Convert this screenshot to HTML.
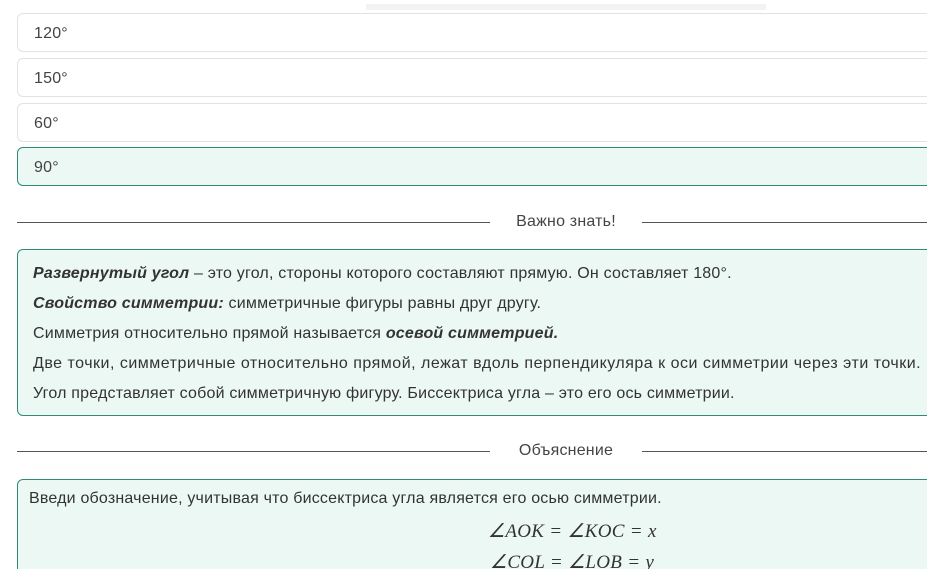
<!DOCTYPE html>
<html style="height:569px;overflow:hidden"><head><style>
body{margin:0;width:927px;height:569px;overflow:hidden;background:#fff;font-family:"Liberation Sans",sans-serif;color:#333;font-size:16px;position:relative;letter-spacing:0.2px}
.opt{position:absolute;left:17px;width:930px;height:37px;border:1px solid #e2e2e2;border-radius:6px;background:#fff;box-sizing:content-box}
.opt span{position:absolute;left:16px;top:11px;color:#444}
.sel{background:#ecf8f3;border-color:#2f8a78}
.div{position:absolute;left:17px;width:910px;height:1px;background:#555}
.dl{position:absolute;background:#fff;text-align:center;color:#444;font-size:16px}
.box{position:absolute;left:17px;width:930px;border:1px solid #2f8a78;border-radius:6px;background:#ecf8f3}
.ln{position:absolute;left:15px;white-space:nowrap;color:#333}
.m{position:absolute;font-family:"Liberation Serif",serif;font-style:italic;font-size:19px;color:#333;white-space:nowrap;letter-spacing:0.3px}
</style></head><body>
<div style="position:absolute;left:366px;top:4px;width:400px;height:6px;background:#f3f3f3"></div>
<div class="opt" style="top:13px"><span>120°</span></div>
<div class="opt" style="top:58px"><span>150°</span></div>
<div class="opt" style="top:103px"><span>60°</span></div>
<div class="opt sel" style="top:147px"><span>90°</span></div>

<div class="div" style="top:222px"></div>
<div class="dl" style="left:490px;width:152px;top:213px">Важно знать!</div>

<div class="box" style="top:249px;height:165px">
<div class="ln" style="top:15px"><b><i>Развернутый угол</i></b> – это угол, стороны которого составляют прямую. Он составляет 180°.</div>
<div class="ln" style="top:45px"><b><i>Свойство симметрии:</i></b> симметричные фигуры равны друг другу.</div>
<div class="ln" style="top:75px">Симметрия относительно прямой называется <b><i>осевой симметрией.</i></b></div>
<div class="ln" style="top:105px;letter-spacing:0.5px">Две точки, симметричные относительно прямой, лежат вдоль перпендикуляра к оси симметрии через эти точки.</div>
<div class="ln" style="top:135px">Угол представляет собой симметричную фигуру. Биссектриса угла – это его ось симметрии.</div>
</div>

<div class="div" style="top:451px"></div>
<div class="dl" style="left:490px;width:152px;top:442px">Объяснение</div>

<div class="box" style="top:479px;height:95px;overflow:hidden">
<div class="ln" style="left:11px;top:10px">Введи обозначение, учитывая что биссектриса угла является его осью симметрии.</div>
<div class="m" style="left:470px;top:40px">∠AOK = ∠KOC = x</div>
<div class="m" style="left:472px;top:71px">∠COL = ∠LOB = y</div>
</div>
</body></html>
